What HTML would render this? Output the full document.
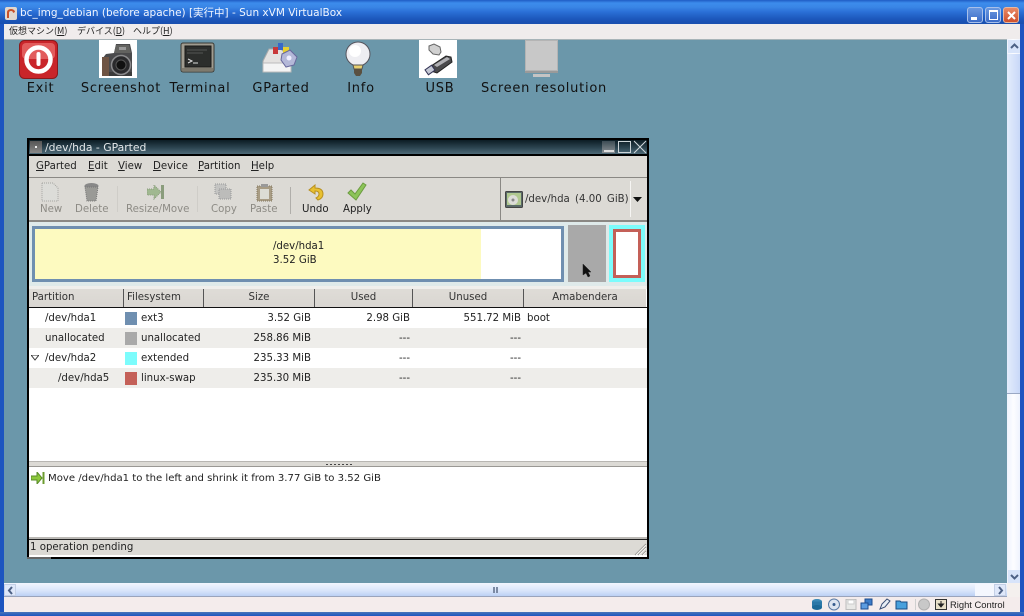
<!DOCTYPE html>
<html><head><meta charset="utf-8">
<style>
html,body{margin:0;padding:0;background:#6b97aa}
#r{position:relative;width:1024px;height:616px;overflow:hidden;background:#6b97aa;font-family:"DejaVu Sans","Noto Sans CJK JP",sans-serif;font-size:10.2px;color:#222}
#r div,#r span.a,#r svg{position:absolute}
.t{white-space:nowrap;line-height:14px}
.dl{font-size:13px;color:#111;line-height:16px;white-space:nowrap;text-align:center;letter-spacing:.75px}
.g{color:#8d8b85}
.th{top:289px;height:18px;background:linear-gradient(#dfdcd7,#d9d6d1);border-right:1px solid #555;line-height:18px;font-size:10.2px;color:#333;white-space:nowrap;box-sizing:content-box}
.sw{width:12px;height:13px;left:125px}
.rt{text-align:right}
u{text-decoration:underline}
</style></head><body><div id="r">
<!-- XP title -->
<div style="left:0;top:0;width:1024px;height:24px;background:linear-gradient(#1f5cc4 0,#3c8cec 3px,#3a86e6 7px,#2a6fd6 12px,#1c57bb 19px,#1a50b0 23px)"></div>
<div style="left:0;top:24px;width:4px;height:592px;background:#1d55c0"></div>
<div style="left:1020px;top:24px;width:4px;height:592px;background:#1d55c0"></div>
<div style="left:0;top:612px;width:1024px;height:4px;background:linear-gradient(#4a74b8,#1d55c0)"></div>
<svg style="left:5px;top:7px" width="12" height="13"><rect width="12" height="13" rx="2" fill="#e0d8d0"/><path d="M2 11V5a4 3 0 0 1 8 0l-2 1a2 2 0 0 0-4 0v5z" fill="#c8502a"/></svg>
<div class="t" style="left:20px;top:6px;color:#f2f6ff;font:10.5px/14px 'DejaVu Sans','Noto Sans CJK JP',sans-serif">bc_img_debian (before apache) [実行中] - Sun xVM VirtualBox</div>
<!-- window btns -->
<div style="left:967px;top:7px;width:14px;height:14px;border:1px solid #a8c0ea;border-radius:3px;background:linear-gradient(#6a98e0,#3c6cc8)"><div style="left:3px;top:9px;width:6px;height:3px;background:#fff"></div></div>
<div style="left:985px;top:7px;width:14px;height:14px;border:1px solid #a8c0ea;border-radius:3px;background:linear-gradient(#6a98e0,#3c6cc8)"><div style="left:3px;top:2px;width:7px;height:7px;border:1px solid #fff;border-top:2px solid #fff"></div></div>
<div style="left:1003px;top:7px;width:14px;height:14px;border:1px solid #e8b8a0;border-radius:3px;background:linear-gradient(#e88a68,#d0502c)"><svg style="left:2px;top:2px" width="11" height="11"><path d="M2 2l7 7M9 2l-7 7" stroke="#fff" stroke-width="2"/></svg></div>
<!-- menu -->
<div style="left:4px;top:24px;width:1016px;height:15px;background:#f0ecec;border-bottom:1px solid #a8b4b8"></div>
<div class="t" style="left:9px;top:24px;font:9px/13px 'Noto Sans CJK JP',sans-serif;color:#222">仮想マシン(<u>M</u>)</div>
<div class="t" style="left:77px;top:24px;font:9px/13px 'Noto Sans CJK JP',sans-serif;color:#222">デバイス(<u>D</u>)</div>
<div class="t" style="left:133px;top:24px;font:9px/13px 'Noto Sans CJK JP',sans-serif;color:#222">ヘルプ(<u>H</u>)</div>

<!-- desktop icons -->
<svg style="left:19px;top:40px" width="39" height="39"><rect x=".5" y=".5" width="38" height="38" rx="5" fill="#c9252a" stroke="#8a1a1c"/><rect x="3" y="3" width="33" height="16" rx="4" fill="#e25c5c"/><circle cx="19.500" cy="19.500" r="12" fill="none" stroke="#fff" stroke-width="4.500"/><rect x="17.500" y="12" width="4" height="14" rx="2" fill="#fff"/></svg>
<div style="left:99px;top:40px;width:38px;height:38px;background:#fff"></div>
<svg style="left:99px;top:40px" width="38" height="38"><path d="M3 19l4-5 8-1 2-9h14l2 9v23H3z" fill="#4a4a4c"/><path d="M17 5h13l2 8H15z" fill="#62625f"/><rect x="3" y="17" width="7" height="19" fill="#6e5444"/><rect x="10" y="32" width="23" height="4" fill="#3a3a3a"/><circle cx="22" cy="25" r="9.500" fill="#2a2a2c" stroke="#8a8a8c" stroke-width="1.500"/><circle cx="22" cy="25" r="5" fill="#111" stroke="#555"/><rect x="20" y="7" width="7" height="3" fill="#999"/></svg>
<svg style="left:180px;top:42px" width="36" height="32"><rect x="1" y="1" width="33" height="29" rx="2" fill="#a09c90" stroke="#3a3a34"/><rect x="5" y="4" width="26" height="21" fill="#2c2e2c" stroke="#1a1a18"/><path d="M7 8h20M7 11h16" stroke="#555" stroke-width="1"/><path d="M8 17l4 2-4 2M13 21h5" stroke="#ddd" fill="none"/><rect x="2" y="26" width="31" height="3" fill="#7e7a6e"/></svg>
<svg style="left:261px;top:41px" width="38" height="34"><path d="M2 20l6-12h12l10 10v12H2z" fill="#e4e2e0" stroke="#aaa"/><rect x="2" y="22" width="28" height="9" fill="#f4f4f4" stroke="#bbb"/><rect x="17" y="2" width="5" height="7" fill="#3868c8"/><rect x="12" y="6" width="5" height="7" fill="#c83838"/><rect x="22" y="6" width="6" height="6" fill="#e8d030"/><path d="M21 13l8-4 7 7-3 8-8 2-5-7z" fill="#b4b8d8" stroke="#68689c"/><circle cx="28" cy="17" r="2.500" fill="#eef"/></svg>
<svg style="left:344px;top:41px" width="28" height="37"><circle cx="14" cy="13" r="12" fill="#eeeef2" stroke="#55555e"/><circle cx="11" cy="10" r="6" fill="#fff"/><path d="M9 24h10l-1 4h-8z" fill="#e8d070" stroke="#555"/><path d="M10 28h8v4l-2 3h-4l-2-3z" fill="#5a5040"/></svg>
<div style="left:419px;top:40px;width:38px;height:38px;background:#fff"></div>
<svg style="left:419px;top:40px" width="38" height="38"><path d="M10 6l5-2 6 3 1 5-2 3-6-1-4-4z" fill="#d0d0d0" stroke="#666"/><path d="M12 26l15-10 5 1 1 5-15 11-6-2z" fill="#4a4a4c" stroke="#222"/><path d="M15 25l13-8 3 2-13 8z" fill="#b0b0b4"/><rect x="7" y="27" width="8" height="6" fill="#c4c8d4" stroke="#335" transform="rotate(-35 11 30)"/></svg>
<div style="left:525px;top:40px;width:33px;height:31px;background:#c8c8c8;border:1px solid #b4b4b4;box-sizing:border-box"></div>
<div style="left:525px;top:71px;width:33px;height:2px;background:#9a9a9a"></div>
<div style="left:533px;top:74px;width:17px;height:3px;background:#c4c4c4"></div>
<div class="dl" style="left:0;top:81px;width:81px">Exit</div>
<div class="dl" style="left:70px;top:81px;width:102px">Screenshot</div>
<div class="dl" style="left:160px;top:81px;width:80px">Terminal</div>
<div class="dl" style="left:241px;top:81px;width:80px">GParted</div>
<div class="dl" style="left:321px;top:81px;width:80px">Info</div>
<div class="dl" style="left:400px;top:81px;width:80px">USB</div>
<div class="dl" style="left:464px;top:81px;width:160px">Screen resolution</div>

<!-- GParted window -->
<div style="left:27px;top:138px;width:622px;height:421px;background:#000"></div>
<div style="left:29px;top:140px;width:618px;height:14px;background:linear-gradient(#0c1c24,#2c4450 55%,#4e6a78)"></div>
<div style="left:30px;top:141px;width:12px;height:12px;background:linear-gradient(#555,#888)"><div style="left:5px;top:5px;width:2px;height:2px;background:#eee"></div></div>
<div class="t" style="left:45px;top:141px;color:#e4e8ea;font-size:10.8px">/dev/hda - GParted</div>
<div style="left:602px;top:141px;width:13px;height:12px;background:linear-gradient(#3c4c54,#8a9094)"><div style="left:2px;top:9px;width:10px;height:2px;background:#ddd"></div></div>
<div style="left:618px;top:141px;width:11px;height:10px;border:1px solid #ccd4d8"></div>
<svg style="left:633px;top:140px" width="14" height="14"><path d="M1 1l12 12M13 1L1 13" stroke="#d0d8dc" fill="none"/></svg>
<!-- menubar -->
<div style="left:29px;top:156px;width:618px;height:65px;background:#dcdad5"></div>
<div style="left:29px;top:177px;width:618px;height:1px;background:#8a8884"></div>
<div class="t" style="left:36px;top:160px"><u>G</u>Parted</div>
<div class="t" style="left:88px;top:160px"><u>E</u>dit</div>
<div class="t" style="left:118px;top:160px"><u>V</u>iew</div>
<div class="t" style="left:153px;top:160px"><u>D</u>evice</div>
<div class="t" style="left:198px;top:160px"><u>P</u>artition</div>
<div class="t" style="left:251px;top:160px"><u>H</u>elp</div>
<!-- toolbar -->
<svg style="left:41px;top:182px" width="18" height="20"><path d="M1 1h11l5 5v13H1z" fill="#dcdcd8" stroke="#a4a4a0" stroke-dasharray="1 1"/></svg>
<svg style="left:83px;top:182px" width="17" height="20"><ellipse cx="8.500" cy="4" rx="7" ry="3" fill="#888"/><path d="M2 5h13l-2 14H4z" fill="#9a9a96" stroke="#777" stroke-dasharray="1 1"/></svg>
<svg style="left:147px;top:184px" width="19" height="16"><path d="M0 5h7V1l7 7-7 7v-4H0z" fill="#a0b890" stroke="#8a9c7c" stroke-dasharray="1 1"/><rect x="14" y="1" width="3" height="14" fill="#8a9c7c"/></svg>
<svg style="left:214px;top:183px" width="18" height="18"><rect x="1" y="1" width="11" height="10" fill="#c4c4c2" stroke="#999" stroke-dasharray="1 1"/><rect x="5" y="6" width="12" height="10" fill="#bcbcba" stroke="#999" stroke-dasharray="1 1"/></svg>
<svg style="left:256px;top:183px" width="17" height="19"><rect x="1" y="3" width="15" height="15" fill="#a89c84" stroke="#847860" stroke-dasharray="1 1"/><rect x="4" y="6" width="9" height="10" fill="#dcdcd4"/><rect x="5" y="1" width="7" height="3" fill="#999"/></svg>
<svg style="left:308px;top:184px" width="16" height="17"><path d="M7 1L1 6l6 4V7c3 0 4 1 4 3 0 2-1 3-3 4l2 2c3-1 5-3 5-6 0-4-3-6-8-6z" fill="#e8c030" stroke="#b89020"/></svg>
<svg style="left:347px;top:182px" width="20" height="20"><path d="M1 11l3-3 4 4L16 1l3 2-10 15z" fill="#8cc458" stroke="#6c9c40"/></svg>
<div class="t g" style="left:40px;top:203px">New</div>
<div class="t g" style="left:75px;top:203px">Delete</div>
<div class="t g" style="left:126px;top:203px">Resize/Move</div>
<div class="t g" style="left:211px;top:203px">Copy</div>
<div class="t g" style="left:250px;top:203px">Paste</div>
<div class="t" style="left:302px;top:203px;color:#222">Undo</div>
<div class="t" style="left:343px;top:203px;color:#222">Apply</div>
<div style="left:117px;top:186px;width:1px;height:26px;background:#cfcdc8"></div>
<div style="left:197px;top:186px;width:1px;height:26px;background:#cfcdc8"></div>
<div style="left:290px;top:187px;width:1px;height:27px;background:#b0aeaa"></div>
<div style="left:500px;top:177px;width:1px;height:43px;background:#8a8884"></div>
<svg style="left:505px;top:191px" width="19" height="17"><rect x=".5" y=".5" width="17" height="16" rx="1" fill="#5a6a68" stroke="#444"/><rect x="2" y="2" width="14" height="12" fill="#b0c890"/><circle cx="8" cy="9" r="5" fill="#dcdcd8"/><circle cx="8" cy="9" r="1.500" fill="#888"/></svg>
<div class="t" style="left:525px;top:193px;color:#333;word-spacing:2px">/dev/hda (4.00 GiB)</div>
<div style="left:630px;top:181px;width:1px;height:36px;background:#f6f5f3"></div>
<svg style="left:633px;top:197px" width="10" height="6"><path d="M0 0h9L4.500 5z" fill="#111"/></svg>
<div style="left:29px;top:220px;width:618px;height:2px;background:#8a8884"></div>
<!-- map -->
<div style="left:29px;top:222px;width:618px;height:64px;background:#dfeaea"></div>
<div style="left:32px;top:226px;width:532px;height:56px;background:#6f8fb0"></div>
<div style="left:35px;top:229px;width:526px;height:50px;background:#fff"></div>
<div style="left:35px;top:229px;width:446px;height:50px;background:#fdfac0"></div>
<div class="t" style="left:273px;top:240px;color:#222;line-height:14px">/dev/hda1<br>3.52 GiB</div>
<div style="left:568px;top:225px;width:38px;height:57px;background:#a9a9a9"></div>
<div style="left:609px;top:225px;width:36px;height:57px;background:#7cfcfc"></div>
<div style="left:613px;top:229px;width:28px;height:49px;background:#c46058"></div>
<div style="left:616px;top:232px;width:22px;height:43px;background:#fff"></div>
<svg style="left:582px;top:263px" width="11" height="15"><path d="M1 1v11l3-2 2 4 2-1-2-4h3z" fill="#111" stroke="#222" stroke-width=".5"/></svg>
<!-- list -->
<div style="left:29px;top:286px;width:618px;height:176px;background:#fff"></div>
<div style="left:29px;top:286px;width:618px;height:3px;background:#f0efec"></div>
<div class="th" style="left:29px;width:93px;padding-left:3px">Partition</div>
<div class="th" style="left:123px;width:76px;padding-left:3px;border-left:1px solid #555">Filesystem</div>
<div class="th" style="left:204px;width:110px;text-align:center">Size</div>
<div class="th" style="left:315px;width:97px;text-align:center">Used</div>
<div class="th" style="left:413px;width:110px;text-align:center">Unused</div>
<div class="th" style="left:524px;width:122px;text-align:center;border-right:none">Amabendera</div>
<div style="left:29px;top:307px;width:618px;height:1px;background:#111"></div>
<div style="left:29px;top:328px;width:618px;height:20px;background:#eeedea"></div>
<div style="left:29px;top:368px;width:618px;height:20px;background:#eeedea"></div>

<div class="t" style="left:45px;top:312px">/dev/hda1</div>
<div class="t" style="left:45px;top:332px">unallocated</div>
<svg style="left:31px;top:355px" width="8" height="6"><path d="M0 0h8L4 5z" fill="none" stroke="#333"/></svg>
<div class="t" style="left:45px;top:352px">/dev/hda2</div>
<div class="t" style="left:58px;top:372px">/dev/hda5</div>

<div class="sw" style="top:312px;background:#6f8fb0"></div>
<div class="sw" style="top:332px;background:#a9a9a9"></div>
<div class="sw" style="top:352px;background:#7cfcfc"></div>
<div class="sw" style="top:372px;background:#c46058"></div>
<div class="t" style="left:141px;top:312px">ext3</div>
<div class="t" style="left:141px;top:332px">unallocated</div>
<div class="t" style="left:141px;top:352px">extended</div>
<div class="t" style="left:141px;top:372px">linux-swap</div>

<div class="t rt" style="left:211px;top:312px;width:100px">3.52 GiB</div>
<div class="t rt" style="left:211px;top:332px;width:100px">258.86 MiB</div>
<div class="t rt" style="left:211px;top:352px;width:100px">235.33 MiB</div>
<div class="t rt" style="left:211px;top:372px;width:100px">235.30 MiB</div>
<div class="t rt" style="left:310px;top:312px;width:100px">2.98 GiB</div>
<div class="t rt" style="left:310px;top:332px;width:100px">---</div>
<div class="t rt" style="left:310px;top:352px;width:100px">---</div>
<div class="t rt" style="left:310px;top:372px;width:100px">---</div>
<div class="t rt" style="left:421px;top:312px;width:100px">551.72 MiB</div>
<div class="t rt" style="left:421px;top:332px;width:100px">---</div>
<div class="t rt" style="left:421px;top:352px;width:100px">---</div>
<div class="t rt" style="left:421px;top:372px;width:100px">---</div>
<div class="t" style="left:527px;top:312px">boot</div>
<!-- pane handle -->
<div style="left:29px;top:461px;width:618px;height:6px;background:#dcdad5;border-top:1px solid #b8b6b2;border-bottom:1px solid #9a9894;box-sizing:border-box"></div>
<div style="left:326px;top:464px;width:26px;height:1px;background:repeating-linear-gradient(90deg,#444 0 2px,transparent 2px 4px)"></div>
<!-- ops -->
<div style="left:29px;top:467px;width:618px;height:71px;background:#fff"></div>
<svg style="left:31px;top:472px" width="14" height="12"><path d="M0 4h6V0l5 6-5 6V8H0z" fill="#8cc83c" stroke="#5a8c28"/><rect x="11.500" y="0" width="2" height="12" fill="#6c9c30"/></svg>
<div class="t" style="left:48px;top:472px;font-size:10.1px">Move /dev/hda1 to the left and shrink it from 3.77 GiB to 3.52 GiB</div>
<!-- status -->
<div style="left:29px;top:537px;width:618px;height:2px;background:#bbb9b5"></div>
<div style="left:29px;top:539px;width:618px;height:1px;background:#222"></div>
<div style="left:29px;top:540px;width:618px;height:15px;background:#dcdad5"></div>
<div style="left:29px;top:555px;width:618px;height:2px;background:#fff"></div>
<div class="t" style="left:30px;top:541px;color:#222">1 operation pending</div>
<svg style="left:634px;top:543px" width="13" height="13"><path d="M12 1L1 12M12 4l-8 8M12 8l-4 4" stroke="#8f8d88" fill="none"/><path d="M12 2L2 12M12 5l-7 7M12 9l-3 3" stroke="#f4f4f2" fill="none"/></svg>
<div style="left:27px;top:557px;width:24px;height:2px;background:#666"></div>

<!-- vertical scrollbar -->
<div style="left:1007px;top:39px;width:13px;height:544px;background:linear-gradient(90deg,#eef3fe,#fdfdff 50%,#eef3fe)"></div>
<div style="left:1007px;top:54px;width:13px;height:340px;background:linear-gradient(90deg,#e4ecfc,#c8d8f8);border-bottom:1px solid #9aa8c4;box-sizing:border-box"></div>
<div style="left:1008px;top:40px;width:12px;height:13px;background:#d8e4fa"><svg style="left:2px;top:3px" width="9" height="7"><path d="M1 5l3.500-3.500L8 5" stroke="#4d6185" stroke-width="2" fill="none"/></svg></div>
<div style="left:1008px;top:570px;width:12px;height:13px;background:#d8e4fa"><svg style="left:2px;top:3px" width="9" height="7"><path d="M1 2l3.500 3.500L8 2" stroke="#4d6185" stroke-width="2" fill="none"/></svg></div>
<!-- horizontal scrollbar -->
<div style="left:4px;top:583px;width:1016px;height:14px;background:#f4f0ee"></div>
<div style="left:4px;top:583px;width:1003px;height:14px;background:linear-gradient(#f2f6fe,#d8e4fa 60%,#bcd0f4);border-bottom:1px solid #9aa4bc;box-sizing:border-box"></div>
<div style="left:4px;top:584px;width:12px;height:12px;background:#dfe8fa;border:1px solid #c4d0e6;box-sizing:border-box"><svg style="left:2px;top:1px" width="7" height="9"><path d="M5 1L2 4.500 5 8" stroke="#4d6185" stroke-width="2" fill="none"/></svg></div>
<div style="left:994px;top:584px;width:12px;height:12px;background:#dfe8fa;border:1px solid #c4d0e6;box-sizing:border-box"><svg style="left:2px;top:1px" width="7" height="9"><path d="M2 1l3 3.500L2 8" stroke="#4d6185" stroke-width="2" fill="none"/></svg></div>
<div style="left:975px;top:584px;width:19px;height:12px;background:#f4f7fe"></div>
<div style="left:493px;top:587px;width:2px;height:6px;background:#7c8aa4"></div>
<div style="left:496px;top:587px;width:2px;height:6px;background:#7c8aa4"></div>
<!-- status bar -->
<div style="left:4px;top:597px;width:1016px;height:15px;background:#f4ecec"></div>
<svg style="left:811px;top:598px" width="145" height="13">
<ellipse cx="6" cy="3.500" rx="5" ry="2.500" fill="#3a8ab8"/><rect x="1" y="3.500" width="10" height="6" fill="#2a78a8"/><ellipse cx="6" cy="9.500" rx="5" ry="2.500" fill="#1c6a98"/>
<circle cx="23" cy="6.500" r="5.500" fill="#dce4f0" stroke="#5a7aa4"/><circle cx="23" cy="6.500" r="1.500" fill="#345a8c"/>
<rect x="35" y="1.500" width="10" height="10" fill="#e8e8e6" stroke="#bdbdbd"/><rect x="37" y="2" width="6" height="4" fill="#fff" stroke="#ccc"/>
<rect x="54" y="1" width="7" height="6" fill="#3c7cc8" stroke="#1c4c90"/><rect x="50" y="5" width="7" height="6" fill="#5c9ce0" stroke="#1c4c90"/>
<path d="M69 11l2-5 5-5 3 2-5 6z" fill="#e8ecf4" stroke="#384c74"/>
<path d="M85 3h4l1 1h6v7H85z" fill="#48a0dc" stroke="#184c84"/>
<rect x="104" y="1" width="1" height="11" fill="#cfcfcf"/>
<circle cx="113" cy="6.500" r="5.500" fill="#c8c8c8" stroke="#b0b0b0"/>
<rect x="124.500" y="1.500" width="11" height="10" fill="#e8dfc8" stroke="#333"/><path d="M130 3v4M127.500 6l2.500 3 2.500-3z" stroke="#222" fill="#222"/>
</svg>
<div class="t" style="left:950px;top:597px;font:9.4px/15px 'Liberation Sans',sans-serif;color:#222">Right Control</div>
</div></body></html>
